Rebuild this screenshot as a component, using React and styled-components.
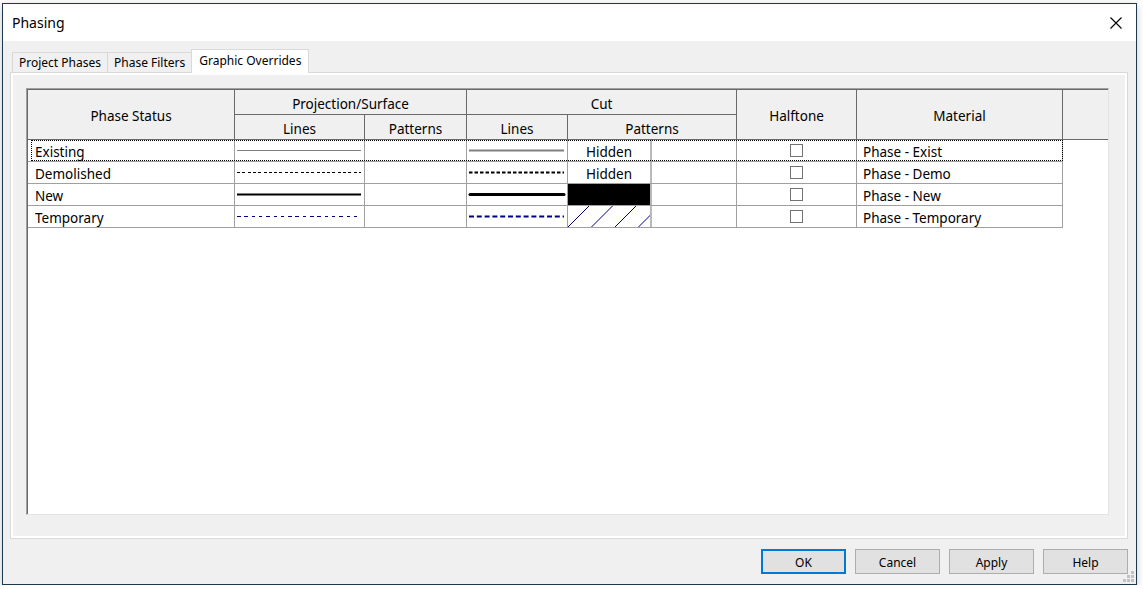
import React from "react";
import styled, { createGlobalStyle, css } from "styled-components";

const GlobalStyle = createGlobalStyle`
  html, body {
    margin: 0;
    padding: 0;
    background: #ffffff;
  }
  body {
    font-family: "Noto Sans", "Segoe UI", sans-serif;
    color: #000;
  }
  * {
    box-sizing: border-box;
  }
`;

const COLS = "207px 130px 102px 101px 169px 120px 206px";

const Window = styled.div`
  position: relative;
  width: 1135px;
  height: 582px;
  margin: 3px 0 0 2px;
  border: 1px solid #1c3a4e;
  background: #f0f0f0;
  box-shadow: 0 2px 8px rgba(0, 0, 0, 0.22);
  display: flex;
  flex-direction: column;
`;

const TitleBar = styled.div`
  height: 37px;
  flex: none;
  background: #ffffff;
  display: flex;
  align-items: center;
  justify-content: space-between;
  padding: 1px 14px 0 9px;
`;

const Title = styled.span`
  font-size: 14px;
  line-height: 1;
`;

const CloseButton = styled.div`
  width: 12px;
  height: 12px;
  display: flex;
`;

const Body = styled.div`
  flex: 1;
  display: flex;
  flex-direction: column;
  padding: 8px 8px 10px 7px;
`;

const TabStrip = styled.div`
  height: 23px;
  display: flex;
  align-items: flex-end;
  padding-left: 2px;
`;

const Tab = styled.div`
  height: 20px;
  padding: 0 6px;
  margin-left: -1px;
  border: 1px solid #d9d9d9;
  border-bottom: none;
  background: #f0f0f0;
  font-size: 12px;
  display: flex;
  align-items: center;
  white-space: nowrap;

  &:first-child {
    margin-left: 0;
  }

  ${(p) =>
    p.$active &&
    css`
      position: relative;
      z-index: 1;
      height: 24px;
      margin-bottom: -1px;
      padding: 0 7px 2px 7px;
      background: #ffffff;
    `}
`;

const Panel = styled.div`
  height: 467px;
  flex: none;
  display: flex;
  border: 1px solid #d9d9d9;
  box-shadow: inset 0 0 0 2px #ffffff;
  padding: 15px 18px 23px 15px;
`;

const GridFrame = styled.div`
  flex: 1;
  background: #ffffff;
  border: 1px solid;
  border-color: #a0a0a0 #e3e3e3 #e3e3e3 #a0a0a0;
  box-shadow: inset 1px 1px 0 #696969;
  padding: 1px 0 0 1px;
  font-size: 13.5px;
  overflow: hidden;
`;

const Header = styled.div`
  display: grid;
  grid-template-columns: ${COLS} 1fr;
  grid-template-rows: 25px 25px;
`;

const HeaderCell = styled.div`
  grid-column: ${(p) => p.$col};
  grid-row: ${(p) => p.$row};
  background: #f0f0f0;
  border-right: ${(p) => (p.$last ? "none" : "1px solid #696969")};
  border-bottom: 1px solid #696969;
  display: flex;
  align-items: center;
  justify-content: center;
  padding-top: 3px;
  white-space: nowrap;
`;

const Row = styled.div`
  position: relative;
  display: grid;
  grid-template-columns: ${COLS};
  height: 22px;
  width: 1035px;

  ${(p) =>
    p.$focused &&
    css`
      &::after {
        content: "";
        position: absolute;
        top: 0;
        left: 3px;
        right: 0;
        bottom: 1px;
        border: 1px dotted #000;
        pointer-events: none;
      }
    `}
`;

const Cell = styled.div`
  border-right: 1px solid #a0a0a0;
  border-bottom: 1px solid #a0a0a0;
  background: #ffffff;
  display: flex;
  align-items: center;
  justify-content: ${(p) => (p.$center ? "center" : "flex-start")};
  padding-left: ${(p) => (p.$pad ? `${p.$pad}px` : "0")};
  padding-top: ${(p) => (p.$text ? "2px" : "0")};
  white-space: nowrap;
  overflow: hidden;
`;

const Swatch = styled.div`
  width: 84px;
  height: 100%;
  flex: none;
  border-right: 2px solid #b9b9b9;
  display: flex;
  align-items: center;
  justify-content: center;
  padding-top: ${(p) => (p.$text ? "2px" : "0")};
  background: ${(p) => (p.$fill ? "#000" : "transparent")};
`;

const CheckBox = styled.span`
  width: 13px;
  height: 13px;
  border: 1px solid #737373;
  background: #fff;
`;

const ButtonRow = styled.div`
  display: flex;
  justify-content: flex-end;
  gap: 9px;
  margin-top: 10px;
`;

const Button = styled.button`
  width: 85px;
  height: 25px;
  margin: 0;
  background: #e1e1e1;
  border: ${(p) => (p.$primary ? "2px solid #0078d7" : "1px solid #adadad")};
  font-family: "Noto Sans", "Segoe UI", sans-serif;
  font-size: 12px;
  color: #000;
  padding: 2px 0 0 0;
`;

const Grip = styled.svg`
  position: absolute;
  right: 2px;
  bottom: 2px;
`;

function LineSample({ width, stroke, thick, dash, round }) {
  return (
    <svg width={width} height="21" style={{ display: "block" }}>
      <line
        x1={round ? 3 : 2}
        x2={width - 3}
        y1="10.5"
        y2="10.5"
        stroke={stroke}
        strokeWidth={thick}
        strokeDasharray={dash}
        strokeLinecap={round ? "round" : "butt"}
        shapeRendering={thick === 1 ? "crispEdges" : "auto"}
      />
    </svg>
  );
}

function Hatch() {
  const starts = [-1, 22.5, 46, 69.5];
  return (
    <svg width="82" height="21" style={{ display: "block" }}>
      {starts.map((x) => (
        <line
          key={x}
          x1={x}
          y1="22"
          x2={x + 22}
          y2="0"
          stroke="#000080"
          strokeWidth="1"
        />
      ))}
    </svg>
  );
}

const rows = [
  {
    name: "Existing",
    proj: { stroke: "#808080", thick: 1 },
    cut: { stroke: "#808080", thick: 2 },
    pattern: "hidden",
    material: "Phase - Exist",
  },
  {
    name: "Demolished",
    proj: { stroke: "#000", thick: 1, dash: "3 2.3" },
    cut: { stroke: "#000", thick: 2, dash: "3.5 2" },
    pattern: "hidden",
    material: "Phase - Demo",
  },
  {
    name: "New",
    proj: { stroke: "#000", thick: 2 },
    cut: { stroke: "#000", thick: 3, round: true },
    pattern: "solid",
    material: "Phase - New",
  },
  {
    name: "Temporary",
    proj: { stroke: "#000080", thick: 1, dash: "3.5 3.8" },
    cut: { stroke: "#000080", thick: 2, dash: "5 2.8" },
    pattern: "hatch",
    material: "Phase - Temporary",
  },
];

function PatternSwatch({ kind }) {
  if (kind === "solid") return <Swatch $fill />;
  if (kind === "hatch")
    return (
      <Swatch>
        <Hatch />
      </Swatch>
    );
  return <Swatch $text>Hidden</Swatch>;
}

export default function App() {
  return (
    <>
      <GlobalStyle />
      <Window>
        <TitleBar>
          <Title>Phasing</Title>
          <CloseButton>
            <svg width="12" height="12" viewBox="0 0 12 12">
              <path d="M0.5 0.5 L11.5 11.5 M11.5 0.5 L0.5 11.5" stroke="#000" strokeWidth="1.1" />
            </svg>
          </CloseButton>
        </TitleBar>

        <Body>
          <TabStrip>
            <Tab>Project Phases</Tab>
            <Tab>Phase Filters</Tab>
            <Tab $active>Graphic Overrides</Tab>
          </TabStrip>

          <Panel>
            <GridFrame>
              <Header>
                <HeaderCell $col="1" $row="1 / 3">Phase Status</HeaderCell>
                <HeaderCell $col="2 / 4" $row="1">Projection/Surface</HeaderCell>
                <HeaderCell $col="4 / 6" $row="1">Cut</HeaderCell>
                <HeaderCell $col="6" $row="1 / 3">Halftone</HeaderCell>
                <HeaderCell $col="7" $row="1 / 3">Material</HeaderCell>
                <HeaderCell $col="8" $row="1 / 3" $last />
                <HeaderCell $col="2" $row="2">Lines</HeaderCell>
                <HeaderCell $col="3" $row="2">Patterns</HeaderCell>
                <HeaderCell $col="4" $row="2">Lines</HeaderCell>
                <HeaderCell $col="5" $row="2">Patterns</HeaderCell>
              </Header>

              {rows.map((r, i) => (
                <Row key={r.name} $focused={i === 0}>
                  <Cell $pad={7} $text>{r.name}</Cell>
                  <Cell>
                    <LineSample width={129} {...r.proj} />
                  </Cell>
                  <Cell />
                  <Cell>
                    <LineSample width={100} {...r.cut} />
                  </Cell>
                  <Cell>
                    <PatternSwatch kind={r.pattern} />
                  </Cell>
                  <Cell $center>
                    <CheckBox />
                  </Cell>
                  <Cell $pad={6} $text>{r.material}</Cell>
                </Row>
              ))}
            </GridFrame>
          </Panel>

          <ButtonRow>
            <Button $primary>OK</Button>
            <Button>Cancel</Button>
            <Button>Apply</Button>
            <Button>Help</Button>
          </ButtonRow>
        </Body>

        <Grip width="11" height="11" viewBox="0 0 11 11">
          {[
            [8, 0],
            [8, 4],
            [4, 4],
            [8, 8],
            [4, 8],
            [0, 8],
          ].map(([x, y]) => (
            <rect key={`${x}-${y}`} x={x} y={y} width="3" height="3" fill="#c2c2c2" />
          ))}
        </Grip>
      </Window>
    </>
  );
}
